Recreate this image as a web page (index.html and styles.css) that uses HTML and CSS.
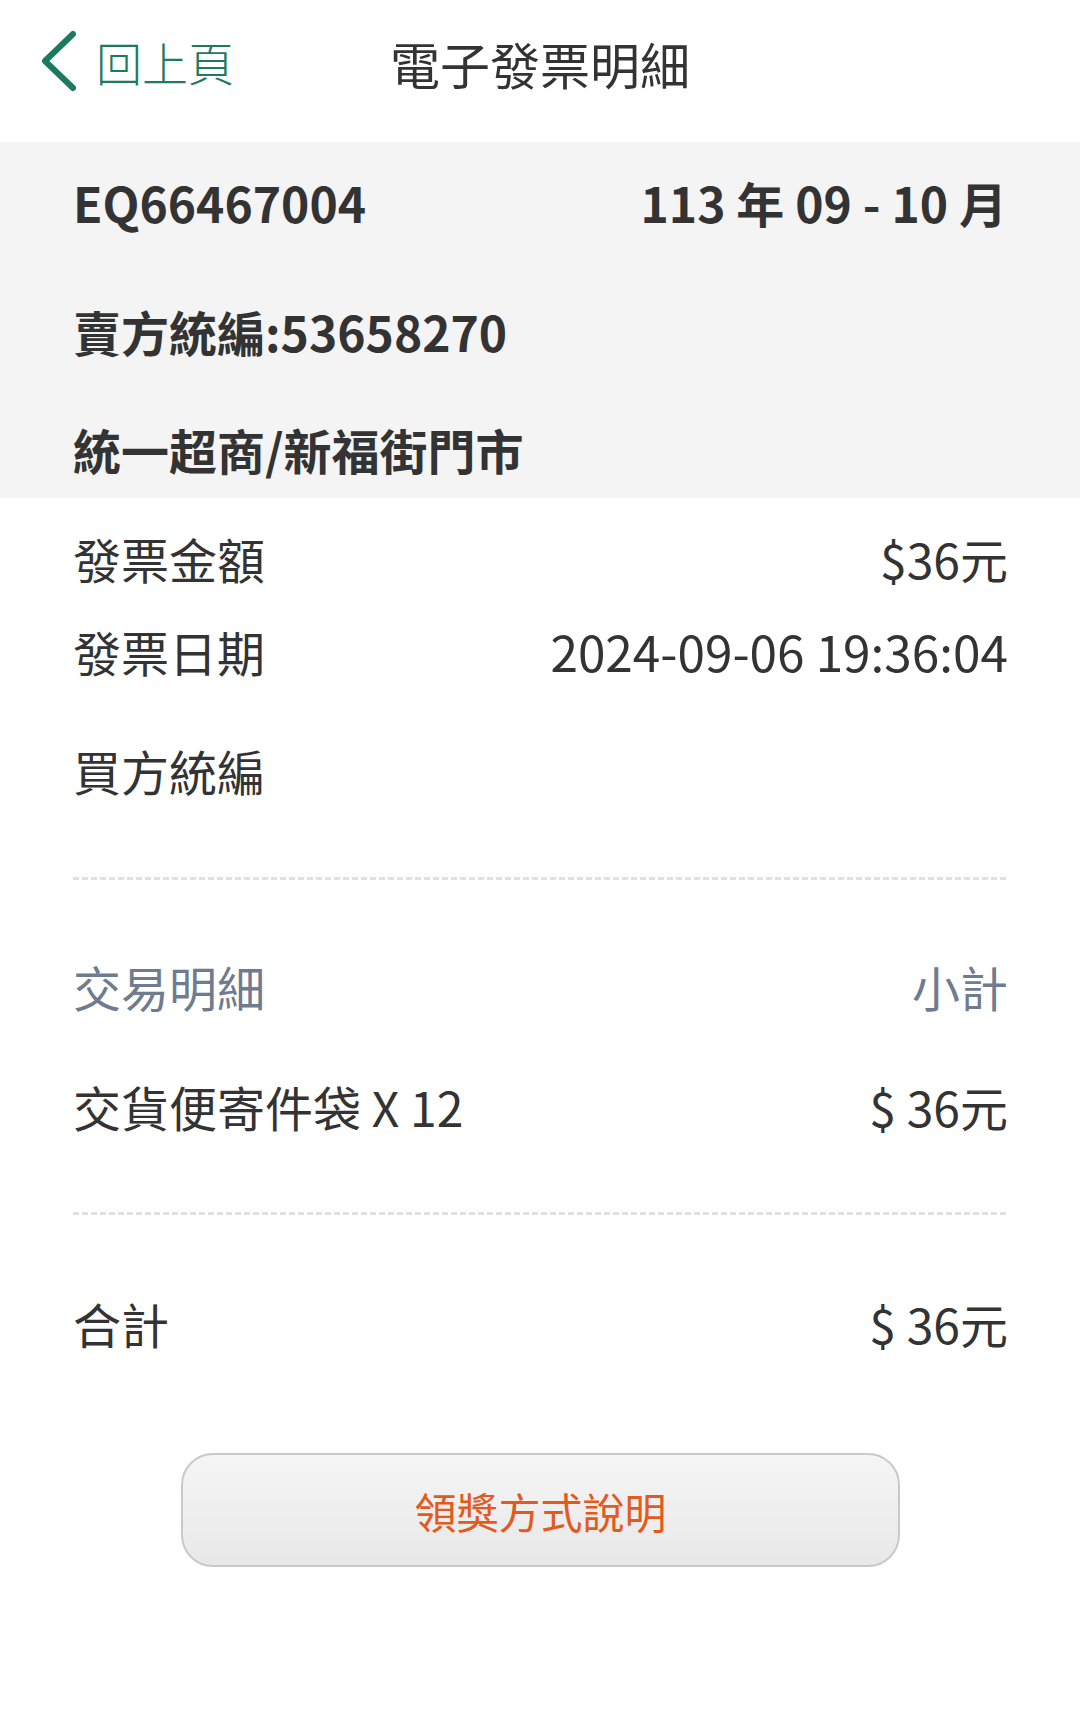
FILE: index.html
```html
<!DOCTYPE html>
<html lang="zh-Hant">
<head>
  <meta charset="UTF-8">
  <meta name="viewport" content="width=device-width, initial-scale=1.0">
  <title>電子發票明細</title>
  <link rel="stylesheet" href="styles.css">
</head>
<body>
  <!-- header -->
  <div class="header">
    <a class="back" href="#">
      <svg class="back-icon" width="40" height="62" viewBox="0 0 40 62">
        <polyline points="33,4 5,31 33,58" fill="none" stroke="#1b7a5f" stroke-width="6" stroke-linecap="round" stroke-linejoin="round"/>
      </svg>
      <span>回上頁</span>
    </a>
    <div class="title">電子發票明細</div>
    <div></div>
  </div>

  <!-- invoice info -->
  <div class="info">
    <div class="row info-top">
      <span>EQ66467004</span>
      <span>113 年 09 - 10 月</span>
    </div>
    <div class="row info-seller">賣方統編:53658270</div>
    <div class="row info-store">統一超商/新福街門市</div>
  </div>

  <div class="detail">
    <div class="row r-amount">
      <span>發票金額</span>
      <span>$36元</span>
    </div>
    <div class="row r-date">
      <span>發票日期</span>
      <span class="date">2024-09-06 19:36:04</span>
    </div>
    <div class="row r-buyer">
      <span>買方統編</span>
      <span></span>
    </div>

    <div class="dots d-first"></div>

    <div class="row r-head">
      <span>交易明細</span>
      <span>小計</span>
    </div>
    <div class="row r-item">
      <span>交貨便寄件袋 X 12</span>
      <span>$ 36元</span>
    </div>

    <div class="dots d-second"></div>

    <div class="row r-total">
      <span>合計</span>
      <span>$ 36元</span>
    </div>

    <div class="btn-wrap">
      <button class="prize-btn">領獎方式說明</button>
    </div>
  </div>
</body>
</html>
```

FILE: styles.css
```css
body {
  margin: 0;
  background: #fff;
  color: #333;
  font-family: "Noto Sans CJK TC", "Noto Sans", sans-serif;
}

.header {
  height: 122px;
  padding-bottom: 20px;
  display: grid;
  grid-template-columns: 1fr auto 1fr;
  align-items: center;
}

.back {
  display: flex;
  align-items: center;
  margin-left: 40px;
  color: #1d7a60;
  text-decoration: none;
  font-size: 46px;
  font-weight: 300;
}

.back-icon {
  margin-right: 16px;
}

.title {
  font-size: 50px;
  padding-top: 4px;
  color: #333;
}

.row {
  display: flex;
  justify-content: space-between;
  line-height: 58px;
  height: 64px;
}

.info {
  background: #f4f4f4;
  padding: 31px 73px 14px;
  font-size: 48px;
  font-weight: 700;
}

.info-seller {
  margin-top: 65px;
}

.info-store {
  margin-top: 54px;
}

.detail {
  padding: 0 72px 0 73px;
  font-size: 48px;
}

.date {
  font-size: 49.5px;
}

.r-amount {
  margin-top: 31px;
}

.r-date {
  margin-top: 29px;
}

.r-buyer {
  margin-top: 55px;
}

.dots {
  height: 3px;
  background-image: repeating-linear-gradient(to right, #e0e0e0 0 6px, transparent 6px 9px);
}

.d-first {
  margin-top: 72px;
}

.r-head {
  margin-top: 77px;
  color: #6f7c8f;
}

.r-item {
  margin-top: 56px;
}

.d-second {
  margin-top: 71px;
}

.r-total {
  margin-top: 79px;
}

.btn-wrap {
  display: flex;
  justify-content: center;
  margin-top: 95px;
}

.prize-btn {
  width: 719px;
  height: 114px;
  border: 2px solid #c9c9c9;
  border-radius: 32px;
  background: linear-gradient(#f5f5f5, #e8e8e8);
  color: #e25a1d;
  font-family: inherit;
  font-size: 42px;
}
```
